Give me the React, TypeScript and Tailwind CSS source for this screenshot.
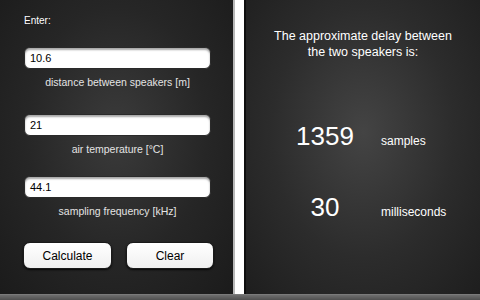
import React from "react";

// Speaker delay calculator: input screen (left) and result screen (right)

const FIELDS = [
  { value: "10.6", label: "distance between speakers [m]", mt: "mt-[20px]" },
  { value: "21", label: "air temperature [°C]", mt: "mt-[25px]" },
  { value: "44.1", label: "sampling frequency [kHz]", mt: "mt-[20px]" },
];

function Field({ value, label, mt }: { value: string; label: string; mt: string }) {
  return (
    <div className={mt}>
      <div className="h-[22px] rounded-[6px] bg-white border border-[#2a2a2a] shadow-[inset_0_2px_2px_rgba(0,0,0,0.35)] flex items-center pl-[5px] text-[11px] text-black">
        {value}
      </div>
      <div className="mt-[7px] text-center text-[10.5px] leading-[13px] text-[#e4e4e4]">
        {label}
      </div>
    </div>
  );
}

function Btn({ children }: { children: React.ReactNode }) {
  return (
    <button className="h-[27px] rounded-[7px] bg-[linear-gradient(#ffffff,#f0f0f0)] text-[12px] text-black shadow-[0_1px_2px_rgba(0,0,0,0.8)] border border-[#1a1a1a]">
      {children}
    </button>
  );
}

export default function App() {
  return (
    <div
      className="w-[480px] h-[300px] flex flex-col bg-[#1e1e1e] overflow-hidden"
      style={{ fontFamily: '"Liberation Sans", Arial, sans-serif' }}
    >
      <div className="flex flex-1 min-h-0">
        {/* Input screen */}
        <div className="w-[233px] h-full bg-[radial-gradient(ellipse_at_50%_45%,#3b3b3b_0%,#262626_55%,#1b1b1b_100%)] pl-[24px] pr-[22px] pt-[15px]">
          <div className="text-[10px] leading-[12px] text-white">Enter:</div>
          {FIELDS.map((f) => (
            <Field key={f.label} {...f} />
          ))}
          <div className="mt-[24px] -ml-[1px] grid grid-cols-[89px_88px] gap-x-[14px]">
            <Btn>Calculate</Btn>
            <Btn>Clear</Btn>
          </div>
        </div>

        {/* Separator */}
        <div className="w-[13px] h-full bg-white border-l-[2px] border-l-[#b8b8b8] border-r-[2px] border-r-[#0e0e0e]" />

        {/* Result screen */}
        <div className="flex-1 h-full bg-[radial-gradient(ellipse_at_50%_45%,#444444_0%,#2c2c2c_55%,#1e1e1e_100%)] pt-[28px]">
          <p className="text-center text-[12.5px] leading-[16px] text-white">
            The approximate delay between
            <br />
            the two speakers is:
          </p>
          <div className="mt-[63px] flex items-baseline pl-[44px]">
            <span className="w-[70px] text-center text-[26px] leading-[26px] font-light text-white">1359</span>
            <span className="ml-[21px] text-[12px] text-white">samples</span>
          </div>
          <div className="mt-[44px] flex items-baseline pl-[44px]">
            <span className="w-[70px] text-center text-[26px] leading-[26px] font-light text-white">30</span>
            <span className="ml-[21px] text-[12px] text-white">milliseconds</span>
          </div>
        </div>
      </div>

      {/* Bottom bar */}
      <div className="h-[6px] bg-[linear-gradient(#6e6e6e,#505050)] border-t border-[#7a7a7a]" />
    </div>
  );
}
